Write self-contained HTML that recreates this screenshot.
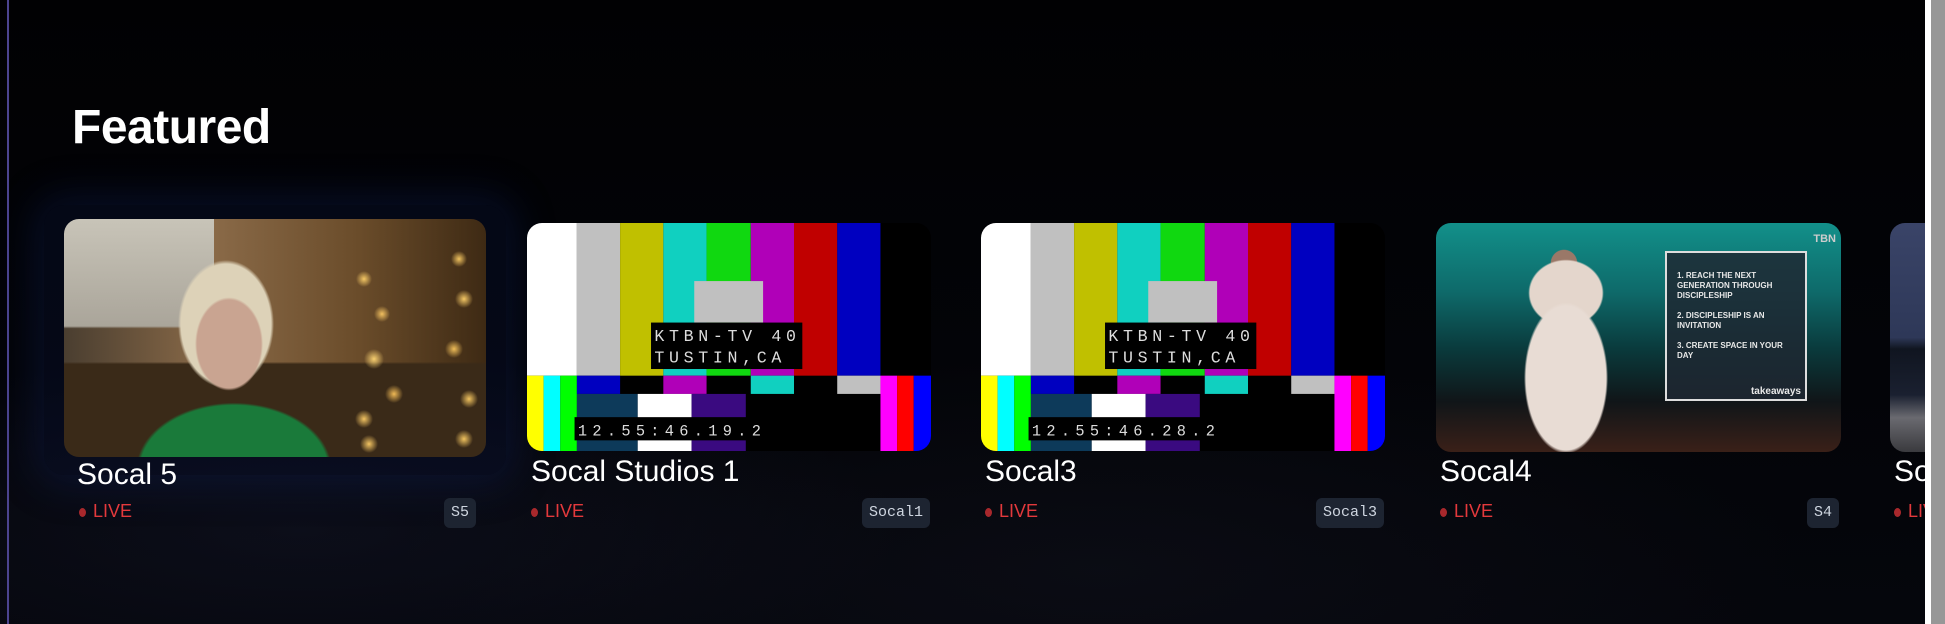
<!DOCTYPE html>
<html><head><meta charset="utf-8"><style>
*{margin:0;padding:0;box-sizing:border-box}
html,body{width:1945px;height:624px;overflow:hidden;background:#020205}
body{position:relative;font-family:"Liberation Sans",sans-serif}
.bg{position:absolute;inset:0;background:
radial-gradient(ellipse 600px 180px at 300px 530px,rgba(30,34,60,.3),transparent),
radial-gradient(ellipse 700px 220px at 1100px 570px,rgba(28,30,45,.25),transparent),
linear-gradient(#010103 0%,#030408 60%,#05060c 100%)}
.lline{position:absolute;left:7px;top:0;width:2px;height:624px;background:#4c4490}
.h{position:absolute;left:72px;top:100px;font-size:48px;font-weight:bold;color:#fff;letter-spacing:-0.5px}
.card{position:absolute;border-radius:15px;overflow:hidden}
.t{position:absolute;color:#fff;font-size:30px;white-space:nowrap}
.live{position:absolute;color:#e3393c;font-size:18px;white-space:nowrap}
.live:before{content:"";display:inline-block;width:7px;height:9px;border-radius:50%;background:#a8282c;margin-right:7px;vertical-align:0}
.b{position:absolute;height:30px;line-height:30px;padding:0 7px;border-radius:6px;background:#1d2431;color:#cfd6e0;font-family:"Liberation Mono",monospace;font-size:15px}
.sb1{position:absolute;left:1925px;top:0;width:6px;height:624px;background:#fff}
.sb2{position:absolute;left:1931px;top:0;width:14px;height:624px;background:#979797}
</style></head><body>
<div class="bg"></div>
<div class="lline"></div>
<div class="h">Featured</div>

<!-- card 1 -->
<div style="position:absolute;left:44px;top:205px;width:462px;height:270px;border-radius:20px;box-shadow:0 0 40px 10px rgba(20,40,110,.3);background:rgba(10,20,60,.3)"></div>
<div class="card" style="left:64px;top:219px;width:422px;height:238px;background:
radial-gradient(circle 8px at 300px 60px,#f5c865,transparent),
radial-gradient(circle 8px at 318px 95px,#f2c060,transparent),
radial-gradient(circle 10px at 310px 140px,#f7cf70,transparent),
radial-gradient(circle 9px at 330px 175px,#efb955,transparent),
radial-gradient(circle 9px at 300px 200px,#f3c462,transparent),
radial-gradient(circle 9px at 305px 225px,#f3c462,transparent),
radial-gradient(circle 8px at 395px 40px,#f1c35f,transparent),
radial-gradient(circle 9px at 400px 80px,#f5c865,transparent),
radial-gradient(circle 9px at 390px 130px,#efbd58,transparent),
radial-gradient(circle 9px at 405px 180px,#f1c35f,transparent),
radial-gradient(circle 9px at 400px 220px,#f1c35f,transparent),
radial-gradient(ellipse 125px 85px at 170px 250px,#1a7a3a 75%,transparent 78%),
radial-gradient(ellipse 40px 55px at 165px 125px,#c9a491 80%,transparent 85%),
radial-gradient(ellipse 60px 80px at 162px 105px,#ddd2b8 75%,transparent 80%),
linear-gradient(180deg,#c8c4b8 0%,#aaa59a 45%,transparent 46%) 0 0/150px 100% no-repeat,
linear-gradient(180deg,transparent 60%,#3a2a18 61%),
linear-gradient(90deg,#4a3e30,#8a6a48 35%,#6a4c2a 70%,#3e2a14)"></div>
<div class="t" style="left:77px;top:458px">Socal 5</div>
<div class="live" style="left:79px;top:501px">LIVE</div>
<div class="b" style="left:444px;top:498px">S5</div>

<!-- color bar cards -->
<svg class="card" style="left:527px;top:223px;width:404px;height:228px" viewBox="0 0 1215 687" preserveAspectRatio="none">
<g id="bars">
<rect x="0" y="0" width="1215" height="687" fill="#000"/>
<rect x="0" y="0" width="150" height="460" fill="#fff"/>
<rect x="150" y="0" width="130" height="460" fill="#c0c0c0"/>
<rect x="280" y="0" width="130" height="460" fill="#c0c000"/>
<rect x="410" y="0" width="130" height="460" fill="#10d0c0"/>
<rect x="540" y="0" width="133" height="460" fill="#10d810"/>
<rect x="673" y="0" width="130" height="460" fill="#b000b8"/>
<rect x="803" y="0" width="130" height="460" fill="#c00000"/>
<rect x="933" y="0" width="130" height="460" fill="#0000c0"/>
<rect x="503" y="175" width="207" height="125" fill="#c0c0c0"/>
<rect x="0" y="460" width="50" height="227" fill="#ffff00"/>
<rect x="50" y="460" width="50" height="227" fill="#00ffff"/>
<rect x="100" y="460" width="50" height="227" fill="#00ff00"/>
<rect x="150" y="460" width="130" height="55" fill="#0000c0"/>
<rect x="410" y="460" width="130" height="55" fill="#b000b8"/>
<rect x="673" y="460" width="130" height="55" fill="#10d0c0"/>
<rect x="933" y="460" width="130" height="55" fill="#c0c0c0"/>
<rect x="1063" y="460" width="50" height="227" fill="#ff00ff"/>
<rect x="1113" y="460" width="50" height="227" fill="#ff0000"/>
<rect x="1163" y="460" width="52" height="227" fill="#0000ff"/>
<rect x="150" y="515" width="183" height="172" fill="#0d3a5a"/>
<rect x="333" y="515" width="162" height="172" fill="#fff"/>
<rect x="495" y="515" width="163" height="172" fill="#3a0a80"/>
<rect x="373" y="300" width="455" height="140" fill="#000"/>
<rect x="143" y="585" width="590" height="70" fill="#000"/>
</g>
<text x="383" y="355" fill="#ddd" font-family="Liberation Mono,monospace" font-size="50" letter-spacing="14">KTBN-TV 40</text>
<text x="383" y="420" fill="#ddd" font-family="Liberation Mono,monospace" font-size="50" letter-spacing="14">TUSTIN,CA</text>
<text x="153" y="640" fill="#ddd" font-family="Liberation Mono,monospace" font-size="46" letter-spacing="16">12.55:46.19.2</text>
</svg>
<div class="t" style="left:531px;top:455px">Socal Studios 1</div>
<div class="live" style="left:531px;top:501px">LIVE</div>
<div class="b" style="left:862px;top:498px">Socal1</div>

<svg class="card" style="left:981px;top:223px;width:404px;height:228px" viewBox="0 0 1215 687" preserveAspectRatio="none">
<use href="#bars"/>
<text x="383" y="355" fill="#ddd" font-family="Liberation Mono,monospace" font-size="50" letter-spacing="14">KTBN-TV 40</text>
<text x="383" y="420" fill="#ddd" font-family="Liberation Mono,monospace" font-size="50" letter-spacing="14">TUSTIN,CA</text>
<text x="153" y="640" fill="#ddd" font-family="Liberation Mono,monospace" font-size="46" letter-spacing="16">12.55:46.28.2</text>
</svg>
<div class="t" style="left:985px;top:455px">Socal3</div>
<div class="live" style="left:985px;top:501px">LIVE</div>
<div class="b" style="left:1316px;top:498px">Socal3</div>

<!-- card 4 -->
<div class="card" style="left:1436px;top:223px;width:405px;height:229px;background:
radial-gradient(ellipse 50px 90px at 130px 155px,#e8dcd4 80%,transparent 84%),
radial-gradient(ellipse 45px 40px at 130px 70px,#e4d6cc 80%,transparent 84%),
radial-gradient(circle 16px at 128px 40px,#9a7868 80%,transparent 85%),
linear-gradient(180deg,#12908a 0%,#0e6a6a 30%,#0a3a3c 55%,#101518 78%,#3a2018 100%)">
<div style="position:absolute;left:229px;top:28px;width:142px;height:150px;border:2px solid #ddd;background:rgba(30,40,50,.85);color:#e8e8e8;font-size:8px;font-weight:bold;line-height:10px;padding:18px 6px 0 10px">1. REACH THE NEXT GENERATION THROUGH DISCIPLESHIP<br><br>2. DISCIPLESHIP IS AN INVITATION<br><br>3. CREATE SPACE IN YOUR DAY<div style="position:absolute;right:4px;bottom:2px;font-size:10px">takeaways</div></div>
<div style="position:absolute;right:5px;top:10px;color:#ccc;font-size:11px;font-weight:bold">TBN</div>
</div>
<div class="t" style="left:1440px;top:455px">Socal4</div>
<div class="live" style="left:1440px;top:501px">LIVE</div>
<div class="b" style="left:1807px;top:498px">S4</div>

<!-- card 5 partial -->
<div class="card" style="left:1890px;top:223px;width:60px;height:229px;border-radius:15px 0 0 15px;background:linear-gradient(180deg,#3a4468 0%,#2e3858 50%,#101520 55%,#1a2030 75%,#6a6a70 85%,#3a3a3e 100%)"></div>
<div class="t" style="left:1894px;top:455px">Socal</div>
<div class="live" style="left:1894px;top:501px">LIVE</div>

<div class="sb1"></div><div class="sb2"></div>
</body></html>
